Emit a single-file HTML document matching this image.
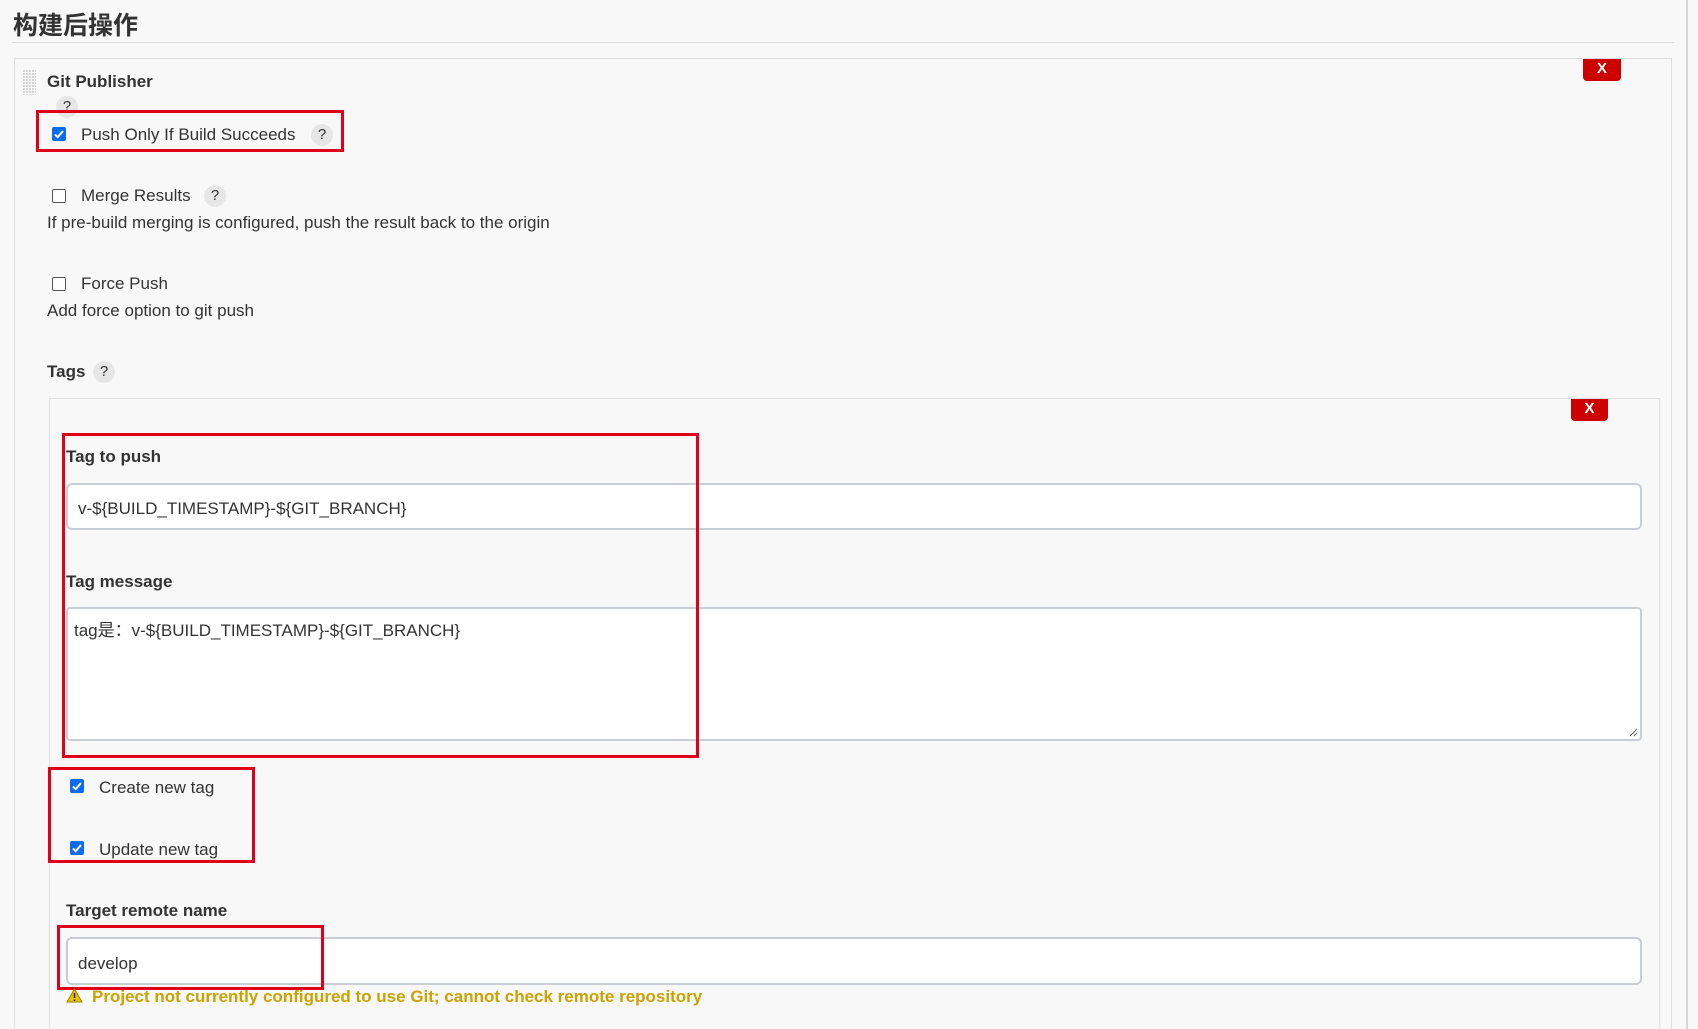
<!DOCTYPE html>
<html style="overflow:hidden;height:1029px"><head><meta charset="utf-8"><style>
*{box-sizing:border-box;margin:0;padding:0}
body{width:1698px;height:1029px;overflow:hidden;background:#f8f8f8;font-family:"Liberation Sans","Noto Sans CJK SC",sans-serif;color:#333;position:relative}
.a{position:absolute;white-space:nowrap}
.t{font-size:17px;line-height:20px}
.b{font-weight:bold}
.q{position:absolute;width:22px;height:22px;border-radius:50%;background:#e6e6e6;color:#333;font-size:15px;line-height:22px;text-align:center}
.cb{position:absolute;width:14px;height:14px;border-radius:2px;background:#0b6cf0}
.cb svg{display:block}
.ub{position:absolute;width:14px;height:14px;border-radius:2px;border:1.5px solid #555;background:#fff}
.red{position:absolute;border:3px solid #e0001b}
.inp{position:absolute;background:#fff;border:2px solid #c8ced3;border-radius:6px}
.x{position:absolute;background:#cc0000;color:#fff;font-weight:bold;font-size:15px;line-height:20px;text-align:center;border-radius:0 0 4px 4px}
</style></head><body>
<div class="a b" style="left:13px;top:8px;font-size:25px;line-height:32px;color:#333;font-family:'Noto Sans CJK SC',sans-serif">构建后操作</div>
<div class="a" style="left:12px;top:42px;width:1662px;height:1px;background:#ddd"></div>
<div class="a" style="left:1686px;top:0;width:2px;height:1029px;background:#d8d8d8"></div>
<div class="a" style="left:14px;top:58px;width:1658px;height:971px;border:1px solid #ddd;border-bottom:none"></div>
<svg class="a" style="left:23px;top:70px" width="13" height="25"><defs><pattern id="p" width="3" height="3" patternUnits="userSpaceOnUse"><rect width="2" height="2" fill="#d4d4d4"/></pattern></defs><rect width="13" height="25" fill="url(#p)"/></svg>
<div class="x" style="left:1583px;top:59px;width:38px;height:22px">X</div>
<div class="a t b" style="left:47px;top:72px">Git Publisher</div>
<div class="q" style="left:56px;top:96px">?</div>
<div class="red" style="left:36px;top:110px;width:308px;height:42px"></div>
<div class="cb" style="left:52px;top:127px"><svg width="14" height="14"><path d="M3 7.5l2.7 2.7L11 4" stroke="#fff" stroke-width="2" fill="none"/></svg></div>
<div class="a t" style="left:81px;top:125px">Push Only If Build Succeeds</div>
<div class="q" style="left:311px;top:124px">?</div>
<div class="ub" style="left:52px;top:189px"></div>
<div class="a t" style="left:81px;top:186px">Merge Results</div>
<div class="q" style="left:204px;top:185px">?</div>
<div class="a t" style="left:47px;top:213px">If pre-build merging is configured, push the result back to the origin</div>
<div class="ub" style="left:52px;top:277px"></div>
<div class="a t" style="left:81px;top:274px">Force Push</div>
<div class="a t" style="left:47px;top:301px">Add force option to git push</div>
<div class="a t b" style="left:47px;top:362px">Tags</div>
<div class="q" style="left:93px;top:361px">?</div>
<div class="a" style="left:49px;top:398px;width:1611px;height:631px;border:1px solid #ddd;border-bottom:none"></div>
<div class="x" style="left:1571px;top:399px;width:37px;height:22px">X</div>
<div class="a t b" style="left:66px;top:447px">Tag to push</div>
<div class="inp" style="left:66px;top:483px;width:1576px;height:47px"></div>
<div class="a t" style="left:78px;top:499px">v-${BUILD_TIMESTAMP}-${GIT_BRANCH}</div>
<div class="a t b" style="left:66px;top:572px">Tag message</div>
<div class="inp" style="left:66px;top:607px;width:1576px;height:134px;border-radius:4px"></div>
<div class="a t" style="left:74px;top:621px">tag是：v-${BUILD_TIMESTAMP}-${GIT_BRANCH}</div>
<svg class="a" style="left:1628px;top:727px" width="10" height="10"><path d="M9 2L2 9M9 6L6 9" stroke="#666" stroke-width="1"/></svg>
<div class="red" style="left:62px;top:433px;width:637px;height:325px"></div>
<div class="red" style="left:48px;top:767px;width:207px;height:96px"></div>
<div class="cb" style="left:70px;top:779px"><svg width="14" height="14"><path d="M3 7.5l2.7 2.7L11 4" stroke="#fff" stroke-width="2" fill="none"/></svg></div>
<div class="a t" style="left:99px;top:778px">Create new tag</div>
<div class="cb" style="left:70px;top:841px"><svg width="14" height="14"><path d="M3 7.5l2.7 2.7L11 4" stroke="#fff" stroke-width="2" fill="none"/></svg></div>
<div class="a t" style="left:99px;top:840px">Update new tag</div>
<div class="a t b" style="left:66px;top:901px">Target remote name</div>
<div class="inp" style="left:66px;top:937px;width:1576px;height:48px"></div>
<div class="red" style="left:57px;top:925px;width:267px;height:65px"></div>
<div class="a t" style="left:78px;top:954px">develop</div>
<svg class="a" style="left:66px;top:988px" width="17" height="15"><path d="M8.5 1L16 14H1z" fill="#e8c300" stroke="#a08000" stroke-width="1"/><path d="M8.5 5v5M8.5 11.5v1.5" stroke="#333" stroke-width="1.6"/></svg>
<div class="a t b" style="left:92px;top:987px;color:#c9a300">Project not currently configured to use Git; cannot check remote repository</div>
</body></html>
